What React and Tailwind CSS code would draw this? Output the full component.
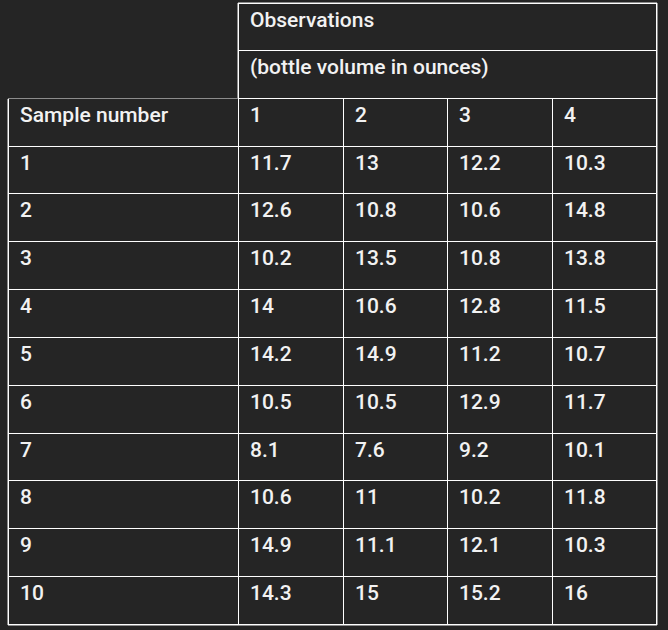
import React from "react";

const rows = [
  ["1", "11.7", "13", "12.2", "10.3"],
  ["2", "12.6", "10.8", "10.6", "14.8"],
  ["3", "10.2", "13.5", "10.8", "13.8"],
  ["4", "14", "10.6", "12.8", "11.5"],
  ["5", "14.2", "14.9", "11.2", "10.7"],
  ["6", "10.5", "10.5", "12.9", "11.7"],
  ["7", "8.1", "7.6", "9.2", "10.1"],
  ["8", "10.6", "11", "10.2", "11.8"],
  ["9", "14.9", "11.1", "12.1", "10.3"],
  ["10", "14.3", "15", "15.2", "16"],
];

const cell = "border-b border-white pl-[11px] pt-[4px] leading-6";

export default function App() {
  return (
    <div
      className="w-[668px] h-[630px] bg-[#252525] text-[#f2f2f2] text-[21px] font-medium pl-[8px] pt-[3px]"
      style={{ fontFamily: "Roboto, 'Liberation Sans', sans-serif" }}
    >
      <div className="grid grid-cols-[230px_106px_104px_105px_104px] grid-rows-[48px_repeat(12,47.83px)] w-[649px]">
        {/* header row 1 */}
        <div />
        <div
          className={`${cell} col-span-4 border-t border-l border-r shadow-[0_-1px_0_#8c8c8c,1px_0_0_#8c8c8c,-1px_0_0_#8c8c8c]`}
        >
          Observations
        </div>
        {/* header row 2 */}
        <div className="border-b border-white" />
        <div
          className={`${cell} col-span-4 border-l border-r shadow-[1px_0_0_#8c8c8c,-1px_0_0_#8c8c8c]`}
        >
          (bottle volume in ounces)
        </div>
        {/* header row 3 */}
        <div className={`${cell} border-l shadow-[-1px_0_0_#8c8c8c,0_-1px_0_#8c8c8c]`}>
          Sample number
        </div>
        <div className={`${cell} border-l border-r`}>1</div>
        <div className={`${cell} border-r`}>2</div>
        <div className={`${cell} border-r`}>3</div>
        <div className={`${cell} border-r shadow-[1px_0_0_#8c8c8c]`}>4</div>
        {rows.map((r, i) => {
          const last = i === rows.length - 1;
          return (
            <React.Fragment key={i}>
              <div
                className={`${cell} border-l ${
                  last
                    ? "shadow-[-1px_0_0_#8c8c8c,0_1px_0_#8c8c8c]"
                    : "shadow-[-1px_0_0_#8c8c8c]"
                }`}
              >
                {r[0]}
              </div>
              <div
                className={`${cell} border-l border-r ${
                  last ? "shadow-[0_1px_0_#8c8c8c]" : ""
                }`}
              >
                {r[1]}
              </div>
              <div
                className={`${cell} border-r ${
                  last ? "shadow-[0_1px_0_#8c8c8c]" : ""
                }`}
              >
                {r[2]}
              </div>
              <div
                className={`${cell} border-r ${
                  last ? "shadow-[0_1px_0_#8c8c8c]" : ""
                }`}
              >
                {r[3]}
              </div>
              <div
                className={`${cell} border-r ${
                  last
                    ? "shadow-[1px_0_0_#8c8c8c,0_1px_0_#8c8c8c]"
                    : "shadow-[1px_0_0_#8c8c8c]"
                }`}
              >
                {r[4]}
              </div>
            </React.Fragment>
          );
        })}
      </div>
    </div>
  );
}
